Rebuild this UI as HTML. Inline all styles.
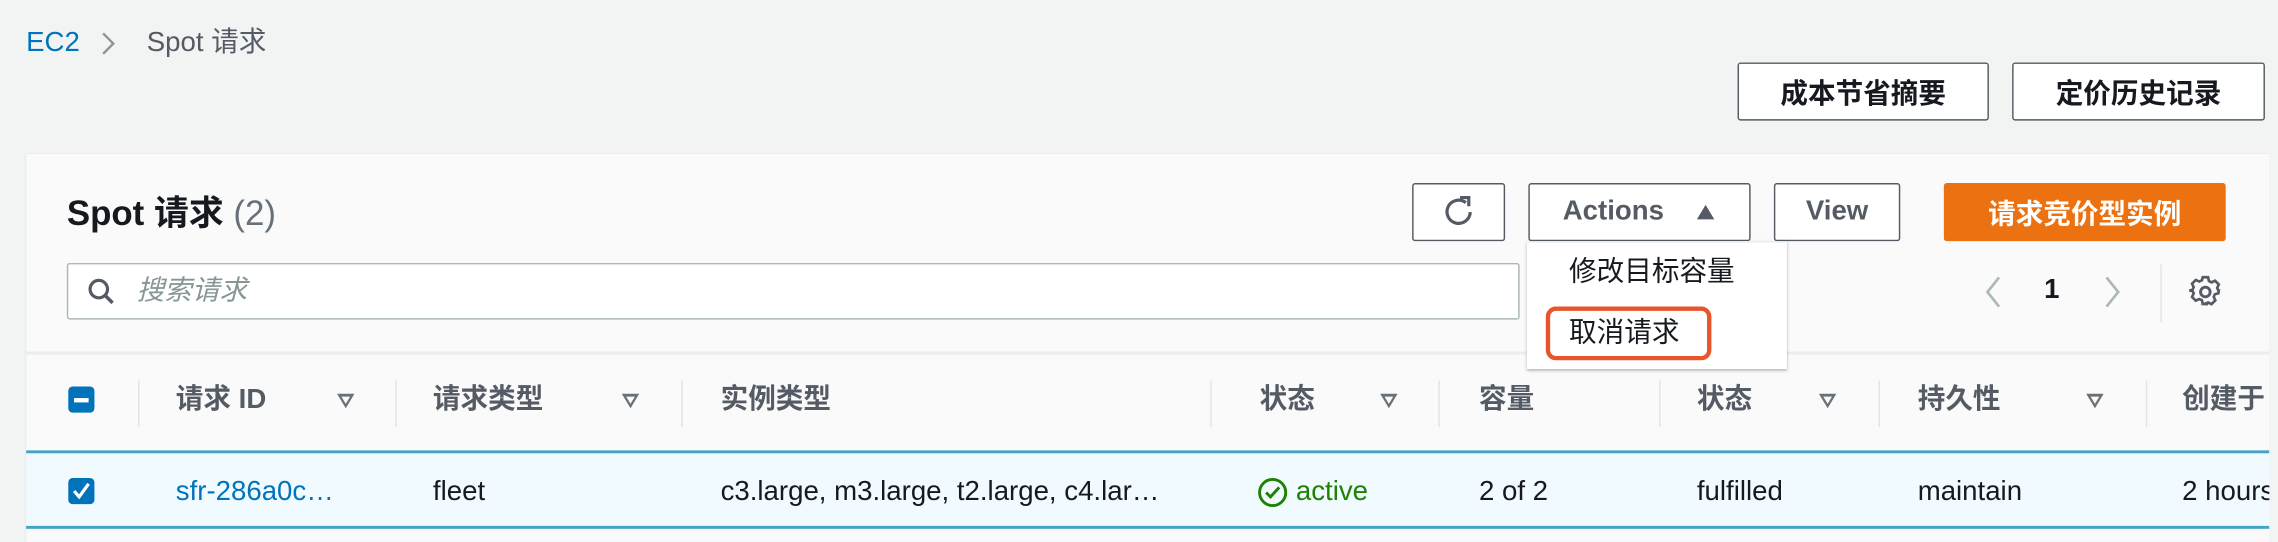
<!DOCTYPE html>
<html><head><meta charset="utf-8"><style>
html,body{margin:0;padding:0;background:#f2f3f3;overflow:hidden;width:2278px;height:542px}
#w{position:absolute;left:0;top:0;width:1568px;height:373px;transform:scale(1.45281);transform-origin:0 0;font-family:"Liberation Sans","Noto Sans CJK SC",sans-serif;color:#16191f;font-size:19px}
.a{position:absolute;white-space:nowrap;line-height:22px}
.btn{position:absolute;box-sizing:border-box;border:1px solid #545b64;border-radius:2px;background:#fff;font-weight:bold;color:#545b64;display:flex;align-items:center;justify-content:center;font-size:19px}
.hd{position:absolute;top:265px;line-height:22px;font-weight:bold;color:#545b64;font-size:19px;white-space:nowrap}
.dv{position:absolute;top:262px;width:1px;height:32px;background:#e1e4e4}
.tri{position:absolute;top:271px;width:0;height:0;border-left:6px solid transparent;border-right:6px solid transparent;border-top:10px solid #687078}
.tri:after{content:"";position:absolute;left:-3px;top:-8px;border-left:3px solid transparent;border-right:3px solid transparent;border-top:5px solid #fafafa}
.cell{position:absolute;top:328px;line-height:22px;font-size:19px;white-space:nowrap}
</style></head><body><div id="w">
<div class="a" style="left:18px;top:19px;color:#0073bb">EC2</div>
<svg class="a" style="left:68px;top:21px" width="14" height="18"><path d="M3 2l7 7-7 7" fill="none" stroke="#879596" stroke-width="1.6"/></svg>
<div class="a" style="left:101px;top:19px;color:#545b64">Spot 请求</div>
<div class="btn" style="left:1196px;top:43px;width:173px;height:40px;color:#16191f">成本节省摘要</div>
<div class="btn" style="left:1385px;top:43px;width:174px;height:40px;color:#16191f">定价历史记录</div>
<div class="a" style="left:18px;top:106px;width:1544px;height:267px;background:#fafafa;box-shadow:0 0 1px #d5dbdb"></div>
<div class="a" style="left:46px;top:134px;font-size:24px;line-height:28px;font-weight:bold">Spot 请求 <span style="font-weight:normal;color:#687078">(2)</span></div>
<div class="btn" style="left:972px;top:126px;width:64px;height:40px"><svg width="24" height="24" viewBox="0 0 24 24"><path d="M17 5.5A8 8 0 1 0 20 12" fill="none" stroke="#545b64" stroke-width="2.2"/><path d="M13 2h6v6" fill="none" stroke="#545b64" stroke-width="2.2"/></svg></div>
<div class="btn" style="left:1052px;top:126px;width:153px;height:40px"><span>Actions</span><svg style="margin-left:22px" width="14" height="12"><path d="M7 1l6 10H1z" fill="#545b64"/></svg></div>
<div class="btn" style="left:1221px;top:126px;width:87px;height:40px">View</div>
<div class="btn" style="left:1338px;top:126px;width:194px;height:40px;background:#ec7211;border-color:#ec7211;color:#fff">请求竞价型实例</div>
<div class="a" style="left:46px;top:181px;width:1000px;height:39px;box-sizing:border-box;border:1px solid #aab7b8;border-radius:2px;background:#fff"></div>
<svg class="a" style="left:60px;top:191px" width="20" height="20"><circle cx="8" cy="8" r="6" fill="none" stroke="#545b64" stroke-width="2.2"/><path d="M12.5 12.5l5 5" stroke="#545b64" stroke-width="2.4"/></svg>
<div class="a" style="left:94px;top:190px;color:#879596;font-style:italic">搜索请求</div>
<svg class="a" style="left:1364px;top:189px" width="16" height="24"><path d="M12 2L4 12l8 10" fill="none" stroke="#aab7b8" stroke-width="1.8"/></svg>
<div class="a" style="left:1407px;top:189px;font-weight:bold">1</div>
<svg class="a" style="left:1446px;top:189px" width="16" height="24"><path d="M4 2l8 10-8 10" fill="none" stroke="#aab7b8" stroke-width="1.8"/></svg>
<div class="a" style="left:1487px;top:182px;width:1px;height:40px;background:#e1e4e4"></div>
<svg class="a" style="left:1506px;top:189px" width="24" height="24" viewBox="0 0 24 24"><path d="M10 2h4l.6 2.8 2 1 2.6-1.2 2.8 2.8-1.2 2.6.9 2L22 12v0l-.3 2-2.6.7-.9 2 1.2 2.6-2.8 2.8-2.6-1.2-2 .9L14 22h-4l-.6-2.8-2-.9-2.6 1.2L2 16.7l1.2-2.6-.9-2L0 12l2.3-.6.9-2L2 6.8 4.8 4l2.6 1.2 2-1z" fill="none" stroke="#545b64" stroke-width="2" transform="translate(1 0) scale(.92)"/><circle cx="12" cy="12" r="3.3" fill="none" stroke="#545b64" stroke-width="2"/></svg>
<div class="a" style="left:18px;top:242px;width:1544px;height:2px;background:#eaeded"></div>
<div class="a" style="left:47px;top:266px;width:18px;height:18px;background:#0073bb;border-radius:3px"><div style="position:absolute;left:4px;top:8px;width:10px;height:2.5px;background:#fff"></div></div>
<div class="dv" style="left:95px"></div><div class="dv" style="left:272px"></div><div class="dv" style="left:469px"></div><div class="dv" style="left:833px"></div><div class="dv" style="left:990px"></div><div class="dv" style="left:1142px"></div><div class="dv" style="left:1293px"></div><div class="dv" style="left:1477px"></div>
<div class="hd" style="left:121px">请求 ID</div><div class="tri" style="left:232px"></div>
<div class="hd" style="left:298px">请求类型</div><div class="tri" style="left:428px"></div>
<div class="hd" style="left:496px">实例类型</div>
<div class="hd" style="left:867px">状态</div><div class="tri" style="left:950px"></div>
<div class="hd" style="left:1018px">容量</div>
<div class="hd" style="left:1168px">状态</div><div class="tri" style="left:1252px"></div>
<div class="hd" style="left:1320px">持久性</div><div class="tri" style="left:1436px"></div>
<div class="hd" style="left:1502px">创建于</div>
<div class="a" style="left:18px;top:310px;width:1544px;height:50px;background:#f1faff;border-top:2px solid #44a3c8;border-bottom:2px solid #44a3c8"></div>
<div class="a" style="left:47px;top:329px;width:18px;height:18px;background:#0073bb;border-radius:3px"><svg width="18" height="18"><path d="M4 9l3.5 4L14 4" fill="none" stroke="#fff" stroke-width="2.2"/></svg></div>
<div class="cell" style="left:121px;color:#0073bb">sfr-286a0c…</div>
<div class="cell" style="left:298px">fleet</div>
<div class="cell" style="left:496px">c3.large, m3.large, t2.large, c4.lar…</div>
<svg class="a" style="left:865px;top:328px" width="22" height="22"><circle cx="11" cy="11" r="9" fill="none" stroke="#1d8102" stroke-width="2"/><path d="M6.5 11l3 3 6-6.5" fill="none" stroke="#1d8102" stroke-width="2"/></svg>
<div class="cell" style="left:892px;color:#1d8102">active</div>
<div class="cell" style="left:1018px">2 of 2</div>
<div class="cell" style="left:1168px">fulfilled</div>
<div class="cell" style="left:1320px">maintain</div>
<div class="cell" style="left:1502px">2 hours</div>
<div class="a" style="left:1562px;top:106px;width:6px;height:267px;background:#f2f3f3"></div>
<div class="a" style="left:1051px;top:166px;width:179px;height:87px;background:#fff;box-shadow:0 1px 2px rgba(0,0,0,.3);border-top:1px solid #eaeded"></div>
<div class="a" style="left:1080px;top:177px">修改目标容量</div>
<div class="a" style="left:1064px;top:211px;width:114px;height:37px;box-sizing:border-box;border:3px solid #e8542c;border-radius:7px"></div>
<div class="a" style="left:1080px;top:219px">取消请求</div>
</div></body></html>
